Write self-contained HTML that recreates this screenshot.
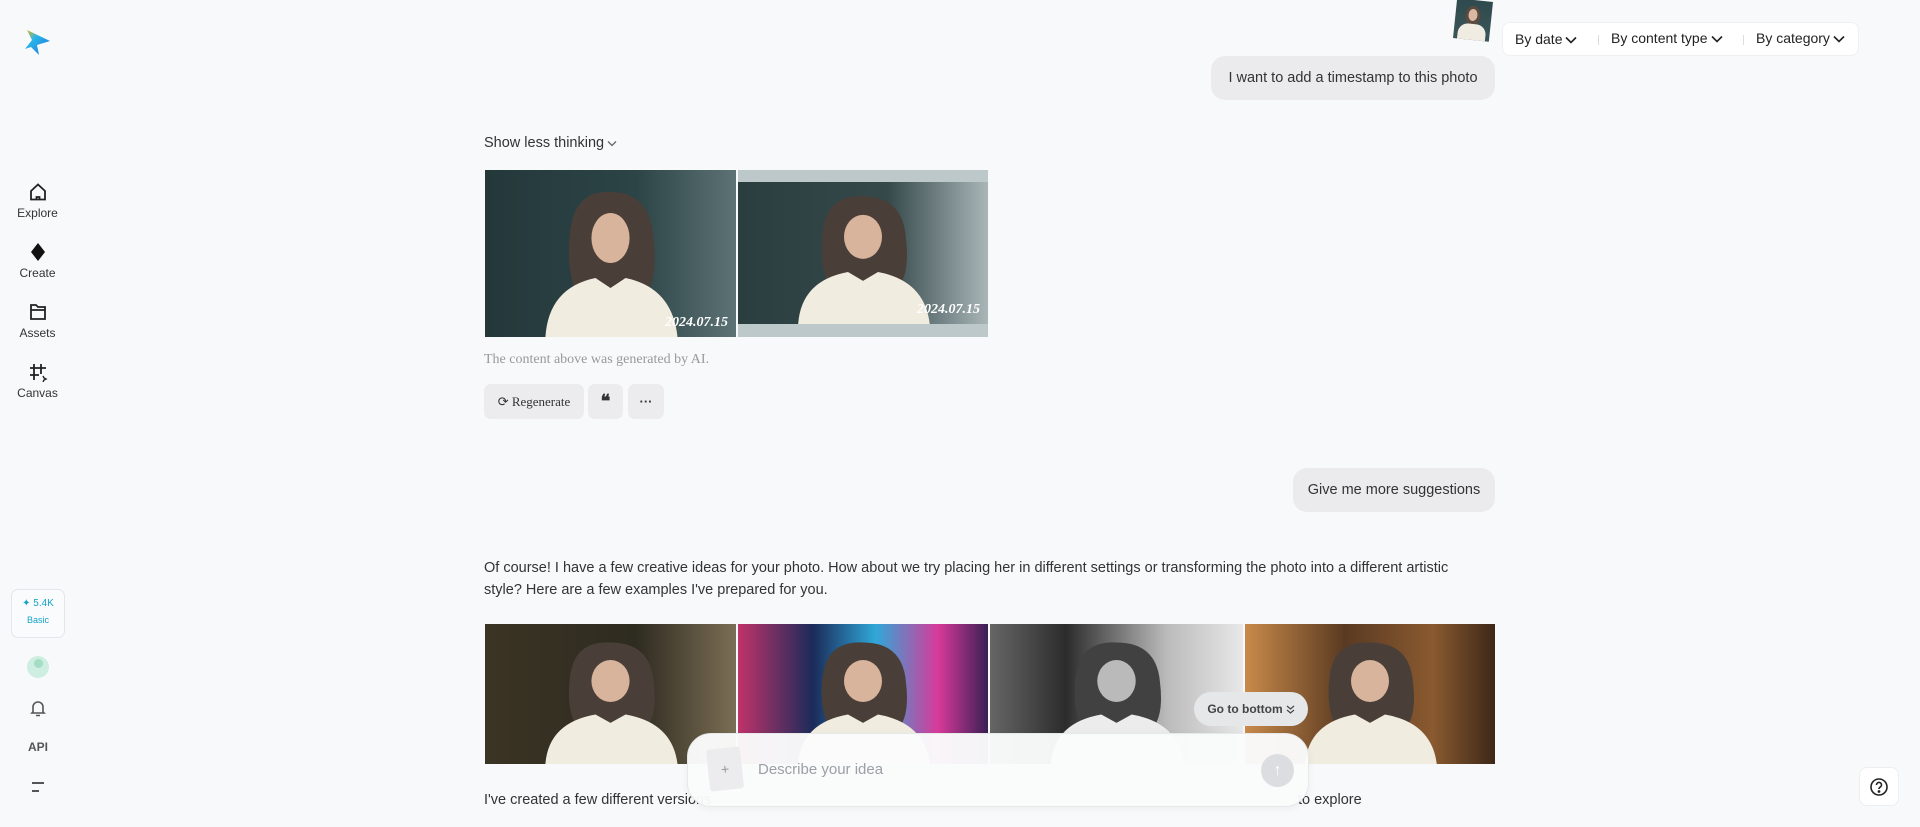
<!DOCTYPE html>
<html><head><meta charset="utf-8"><style>
*{margin:0;padding:0;box-sizing:border-box}
body{width:1920px;height:827px;overflow:hidden;background:#f8f9fb;font-family:"Liberation Sans",sans-serif;color:#222;position:relative}
.a{position:absolute}
.nav{position:absolute;left:0;width:75px;text-align:center;font-size:12px;color:#333}
.nav svg{display:block;margin:0 auto 4px}
.bub{position:absolute;background:#ebebed;border-radius:14px;font-size:14.5px;color:#333;display:flex;align-items:center;justify-content:center}
.img{position:absolute;overflow:hidden}
.img svg{position:absolute;left:0;top:0;width:100%;height:100%}
.ts{position:absolute;right:8px;bottom:6px;color:#fff;font-family:"Liberation Serif",serif;font-style:italic;font-weight:bold;font-size:14px}
.btn{position:absolute;top:384px;height:35px;background:#ececee;border-radius:7px;display:flex;align-items:center;justify-content:center;font-size:13px;color:#333}
p.t{position:absolute;left:484px;font-size:14.5px;color:#333;line-height:22px}
.ch{display:inline-block;vertical-align:middle;margin-left:3px}
</style></head><body>
<svg class="a" style="left:22px;top:27px" width="30" height="30" viewBox="0 0 30 30"><defs><linearGradient id="lg" x1="0" y1="0" x2="1" y2="1"><stop offset="0" stop-color="#f7b500"/><stop offset=".35" stop-color="#29b6e8"/><stop offset="1" stop-color="#1e6fe0"/></linearGradient></defs><path d="M5 3 L28 14 L15 18 L17 28 L9 20 L3 22 L10 13 Z" fill="url(#lg)"/></svg>

<div class="nav" style="top:182px"><svg width="20" height="20" viewBox="0 0 20 20" fill="none" stroke="#222" stroke-width="1.8"><path d="M3 9 L10 2.5 L17 9 V17.5 H3 Z"/><path d="M8.5 17.5 V15 H11.5 V17.5"/></svg>Explore</div>
<div class="nav" style="top:242px"><svg width="20" height="20" viewBox="0 0 20 20"><path d="M10 1 L17 10 L10 19 L3 10 Z" fill="#111"/></svg>Create</div>
<div class="nav" style="top:302px"><svg width="20" height="20" viewBox="0 0 20 20" fill="none" stroke="#222" stroke-width="1.8"><path d="M3 3 H8 L10 5 H17 V17 H3 Z M3 8 H17"/></svg>Assets</div>
<div class="nav" style="top:362px"><svg width="20" height="20" viewBox="0 0 20 20" fill="none" stroke="#222" stroke-width="1.8"><path d="M6 2 V18 M13 2 V12 M2 6 H18 M2 13 H11"/><path d="M15 14 L16 16 L18 17 L16 18 L15 20" stroke-width="1.4"/></svg>Canvas</div>

<div class="a" style="left:11px;top:589px;width:54px;height:49px;border:1px solid #e4e6ea;border-radius:7px;background:#fafbfc;text-align:center;color:#14a3c7;font-size:10px"><div style="margin-top:8px">✦ 5.4K</div><div style="margin-top:6px;font-size:9px">Basic</div></div>
<div class="a" style="left:27px;top:656px;width:22px;height:22px;border-radius:50%;background:#cdeee0"><div style="width:9px;height:9px;border-radius:50%;background:#a4dcc4;margin:3px auto 0"></div></div>
<svg class="a" style="left:29px;top:699px" width="18" height="19" viewBox="0 0 18 19" fill="none" stroke="#555" stroke-width="1.6"><path d="M4 13 V8 a5 5 0 0 1 10 0 V13 L15 14 H3 Z M7 16.5 H11"/></svg>
<div class="a" style="left:28px;top:740px;font-size:12px;font-weight:bold;color:#555">API</div>
<svg class="a" style="left:30px;top:780px" width="16" height="14" viewBox="0 0 16 14" stroke="#555" stroke-width="2"><path d="M2 3 H14 M2 11 H9"/></svg>

<div class="a" style="left:1455px;top:0;width:36px;height:40px;transform:rotate(6deg);background:linear-gradient(#2f4a4e,#3b5558);overflow:hidden"><div style="position:absolute;left:10px;top:6px;width:15px;height:20px;border-radius:50%;background:#5a4a40"></div><div style="position:absolute;left:13px;top:9px;width:9px;height:12px;border-radius:50%;background:#d9b9a3"></div><div style="position:absolute;left:4px;top:24px;width:28px;height:20px;border-radius:10px 10px 0 0;background:#f0ece2"></div></div>

<div class="a" style="left:1502px;top:22px;width:357px;height:34px;background:#fff;border-radius:8px;border:1px solid #eef0f2;font-size:14px;color:#222">
<span class="a" style="left:12px;top:8px">By date<svg class="ch" width="12" height="8" viewBox="0 0 12 8" fill="none" stroke="#222" stroke-width="1.6"><path d="M1 1.5 L6 6.5 L11 1.5"/></svg></span>
<span class="a" style="left:95px;top:12px;width:1px;height:10px;background:#ddd"></span>
<span class="a" style="left:108px;top:7px">By content type<svg class="ch" width="12" height="8" viewBox="0 0 12 8" fill="none" stroke="#222" stroke-width="1.6"><path d="M1 1.5 L6 6.5 L11 1.5"/></svg></span>
<span class="a" style="left:240px;top:12px;width:1px;height:10px;background:#ddd"></span>
<span class="a" style="left:253px;top:7px">By category<svg class="ch" width="12" height="8" viewBox="0 0 12 8" fill="none" stroke="#222" stroke-width="1.6"><path d="M1 1.5 L6 6.5 L11 1.5"/></svg></span>
</div>

<div class="bub" style="left:1211px;top:56px;width:284px;height:44px">I want to add a timestamp to this photo</div>
<div class="a" style="left:484px;top:135px;font-size:14.5px;color:#333">Show less thinking<svg class="ch" width="10" height="7" viewBox="0 0 10 7" fill="none" stroke="#666" stroke-width="1.3"><path d="M1 1.5 L5 5.5 L9 1.5"/></svg></div>

<svg width="0" height="0" style="position:absolute"><defs><g id="p"><path d="M85 60 Q90 20 125 22 Q165 22 168 70 Q172 110 160 125 L92 125 Q80 100 85 60 Z" fill="#4a3f38"/><ellipse cx="125" cy="68" rx="19" ry="25" fill="#d8b49c"/><path d="M60 170 Q62 118 110 108 L125 118 L140 108 Q188 118 192 170 Z" fill="#f1ece0"/></g></defs></svg>

<div class="img" style="left:485px;top:170px;width:251px;height:167px;background:linear-gradient(90deg,#24383a,#2c4446 60%,#5d7275)"><svg viewBox="0 0 250 167" preserveAspectRatio="none"><use href="#p"/></svg><span class="ts">2024.07.15</span></div>
<div class="img" style="left:738px;top:170px;width:250px;height:167px;background:#bcc8c9"><div class="a" style="left:0;top:12px;width:250px;height:142px;background:linear-gradient(90deg,#2a3e40,#35494b 60%,#a9b6b8)"><svg viewBox="0 0 250 142" preserveAspectRatio="none" style="position:absolute;width:100%;height:100%"><use href="#p" transform="translate(0,-5) scale(1,.88)"/></svg><span class="ts">2024.07.15</span></div></div>

<div class="a" style="left:484px;top:352px;font-family:'Liberation Serif',serif;font-size:14px;color:#999">The content above was generated by AI.</div>
<div class="btn" style="left:484px;width:100px;font-family:'Liberation Serif',serif">⟳&nbsp;Regenerate</div>
<div class="btn" style="left:588px;width:35px;font-family:'Liberation Serif',serif;font-weight:bold;font-size:18px">❝</div>
<div class="btn" style="left:628px;width:36px;font-weight:bold">···</div>

<div class="bub" style="left:1293px;top:468px;width:202px;height:44px">Give me more suggestions</div>
<p class="t" style="top:557px;width:1000px">Of course! I have a few creative ideas for your photo. How about we try placing her in different settings or transforming the photo into a different artistic style? Here are a few examples I've prepared for you.</p>

<div class="img" style="left:485px;top:624px;width:251px;height:140px;background:linear-gradient(90deg,#3b3424,#2e2b20 60%,#7b6e55)"><svg viewBox="0 0 250 167" preserveAspectRatio="none"><use href="#p"/></svg></div>
<div class="img" style="left:738px;top:624px;width:250px;height:140px;background:linear-gradient(90deg,#c0336a,#1b2b5a 30%,#2fa8d8 55%,#d83a9a 80%,#3a1f55)"><svg viewBox="0 0 250 167" preserveAspectRatio="none"><use href="#p"/></svg></div>
<div class="img" style="left:990px;top:624px;width:253px;height:140px;background:linear-gradient(90deg,#666,#2c2c2c 30%,#bbb 70%,#e8e8e8)"><svg viewBox="0 0 250 167" preserveAspectRatio="none" style="filter:grayscale(1)"><use href="#p"/></svg></div>
<div class="img" style="left:1245px;top:624px;width:250px;height:140px;background:linear-gradient(90deg,#c98a4a,#5a3a22 40%,#8a5a30 75%,#3c2818)"><svg viewBox="0 0 250 167" preserveAspectRatio="none"><use href="#p"/></svg></div>

<div class="a" style="left:1194px;top:692px;width:114px;height:34px;border-radius:17px;background:#e6e7e9;font-size:12px;font-weight:bold;color:#444;display:flex;align-items:center;justify-content:center">Go to bottom<svg class="ch" width="9" height="9" viewBox="0 0 9 9" fill="none" stroke="#444" stroke-width="1.2"><path d="M1 1 L4.5 4 L8 1 M1 5 L4.5 8 L8 5"/></svg></div>

<p class="t" style="top:789px">I've created a few different versions</p>
<p class="t" style="top:789px;left:1298px">to explore</p>

<div class="a" style="left:687px;top:733px;width:622px;height:74px;border-radius:24px;background:rgba(250,251,251,.97);border:1px solid #e6e8ea;box-shadow:0 2px 8px rgba(0,0,0,.05)">
<div class="a" style="left:20px;top:14px;width:34px;height:42px;background:#ececee;transform:rotate(-6deg);border-radius:3px;color:#999;font-size:14px;display:flex;align-items:center;justify-content:center">+</div>
<div class="a" style="left:70px;top:27px;font-size:15px;color:#9aa0a6">Describe your idea</div>
<div class="a" style="left:573px;top:20px;width:33px;height:33px;border-radius:50%;background:#dcdde0;color:#fff;font-size:16px;display:flex;align-items:center;justify-content:center">↑</div>
</div>

<div class="a" style="left:1859px;top:767px;width:40px;height:39px;border-radius:8px;background:#fff;border:1px solid #eceef0;display:flex;align-items:center;justify-content:center"><svg width="20" height="20" viewBox="0 0 20 20" fill="none" stroke="#222" stroke-width="1.6"><circle cx="10" cy="10" r="8"/><path d="M7.5 8 a2.5 2.5 0 1 1 3.5 2.2 Q10 11 10 12"/><circle cx="10" cy="14.5" r=".6" fill="#222"/></svg></div>
</body></html>
